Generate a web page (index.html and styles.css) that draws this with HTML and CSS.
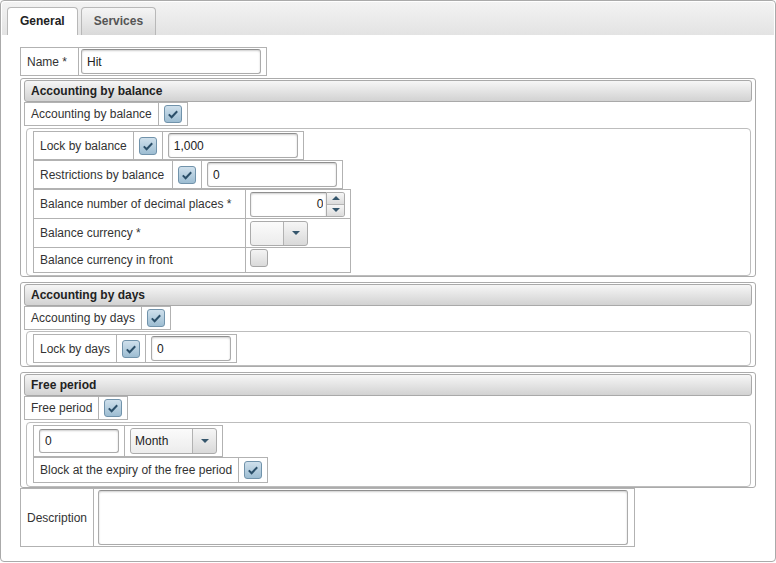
FILE: index.html
```html
<!DOCTYPE html>
<html>
<head>
<meta charset="utf-8">
<link rel="stylesheet" href="styles.css">
</head>
<body>
<div class="tabs">
  <ul class="tab-nav">
    <li class="tab active">General</li>
    <li class="tab">Services</li>
  </ul>
  <div class="panel">
    <div class="ft c2 rows-28">
      <div class="lbl"><span>Name <span class="req">*</span></span></div>
      <div class="val name-val"><input class="txt w180" value="Hit"></div>
    </div>

    <div class="group g1">
      <div class="group-head">Accounting by balance</div>
      <div class="ft c2 rows-23">
        <div class="lbl"><span>Accounting by balance</span></div>
        <div class="cbc"><span class="chk on"><svg viewBox="0 0 16 16" width="16" height="16"><path d="M3.8 8.4 L6.6 11.2 L12.2 5.2" fill="none" stroke="#2b4f69" stroke-width="2"/></svg></span></div>
      </div>
      <div class="inner">
        <div class="ft c3 rows-28">
          <div class="lbl"><span>Lock by balance</span></div>
          <div class="cbc"><span class="chk on"><svg viewBox="0 0 16 16" width="16" height="16"><path d="M3.8 8.4 L6.6 11.2 L12.2 5.2" fill="none" stroke="#2b4f69" stroke-width="2"/></svg></span></div>
          <div class="val"><input class="txt w130" value="1,000"></div>
        </div>
        <div class="ft c3 rows-28">
          <div class="lbl wide"><span>Restrictions by balance</span></div>
          <div class="cbc"><span class="chk on"><svg viewBox="0 0 16 16" width="16" height="16"><path d="M3.8 8.4 L6.6 11.2 L12.2 5.2" fill="none" stroke="#2b4f69" stroke-width="2"/></svg></span></div>
          <div class="val"><input class="txt w130" value="0"></div>
        </div>
        <div class="ft c2 rows-dec dec">
          <div class="lbl"><span>Balance number of decimal places <span class="req">*</span></span></div>
          <div class="val vpad">
            <div class="spin">
              <input class="txt num" value="0">
              <div class="spin-btns">
                <span class="sb"><i class="tri up"></i></span>
                <span class="sb"><i class="tri down"></i></span>
              </div>
            </div>
          </div>
          <div class="lbl"><span>Balance currency <span class="req">*</span></span></div>
          <div class="val vpad">
            <div class="sel w58"><span class="sel-text"></span><span class="sel-btn"><i class="tri down"></i></span></div>
          </div>
          <div class="lbl"><span>Balance currency in front</span></div>
          <div class="val vpad top"><span class="chk"></span></div>
        </div>
      </div>
    </div>

    <div class="group g2">
      <div class="group-head">Accounting by days</div>
      <div class="ft c2 rows-23">
        <div class="lbl"><span>Accounting by days</span></div>
        <div class="cbc"><span class="chk on"><svg viewBox="0 0 16 16" width="16" height="16"><path d="M3.8 8.4 L6.6 11.2 L12.2 5.2" fill="none" stroke="#2b4f69" stroke-width="2"/></svg></span></div>
      </div>
      <div class="inner inner2">
        <div class="ft c3 rows-28">
          <div class="lbl"><span>Lock by days</span></div>
          <div class="cbc"><span class="chk on"><svg viewBox="0 0 16 16" width="16" height="16"><path d="M3.8 8.4 L6.6 11.2 L12.2 5.2" fill="none" stroke="#2b4f69" stroke-width="2"/></svg></span></div>
          <div class="val"><input class="txt w80" value="0"></div>
        </div>
      </div>
    </div>

    <div class="group g3">
      <div class="group-head">Free period</div>
      <div class="ft c2 rows-23">
        <div class="lbl"><span>Free period</span></div>
        <div class="cbc"><span class="chk on"><svg viewBox="0 0 16 16" width="16" height="16"><path d="M3.8 8.4 L6.6 11.2 L12.2 5.2" fill="none" stroke="#2b4f69" stroke-width="2"/></svg></span></div>
      </div>
      <div class="inner inner3">
        <div class="ft c2 rows-31">
          <div class="val"><input class="txt w80 h24" value="0"></div>
          <div class="val"><div class="sel w87 h26"><span class="sel-text">Month</span><span class="sel-btn"><i class="tri down"></i></span></div></div>
        </div>
        <div class="ft c2 rows-25">
          <div class="lbl"><span>Block at the expiry of the free period</span></div>
          <div class="cbc"><span class="chk on"><svg viewBox="0 0 16 16" width="16" height="16"><path d="M3.8 8.4 L6.6 11.2 L12.2 5.2" fill="none" stroke="#2b4f69" stroke-width="2"/></svg></span></div>
        </div>
      </div>
    </div>

    <div class="ft c2 rows-58">
      <div class="lbl"><span>Description</span></div>
      <div class="val desc-val"><textarea class="area"></textarea></div>
    </div>
  </div>
</div>
<div class="foot"><span class="fb w66"></span><span class="fb w77"></span></div>
</body>
</html>
```
FILE: styles.css
```css
* { box-sizing: border-box; }
html, body { margin: 0; padding: 0; overflow: hidden; background: #fff; }
body {
  font-family: "Liberation Sans", Arial, sans-serif;
  font-size: 12px;
  color: #333;
}

.tabs {
  width: 776px;
  border: 1px solid #aaa;
  border-radius: 4px;
  padding: 1px;
}
.tab-nav {
  display: flex;
  gap: 3px;
  margin: 0;
  padding: 5px 0 0 5px;
  list-style: none;
  background: linear-gradient(#f3f3f3, #e3e3e3);
  border-radius: 3px 3px 0 0;
}
.tab {
  height: 28px;
  line-height: 27px;
  padding: 0 12px;
  border: 1px solid #b8b8b8;
  border-bottom: 0;
  border-radius: 4px 4px 0 0;
  font-weight: bold;
  color: #555;
  background: linear-gradient(#f5f5f5, #d9d9d9);
}
.tab.active { background: #fff; color: #222; }

.panel { padding: 12px 18px 13px; }

/* form tables */
.ft {
  display: grid;
  width: max-content;
  border-top: 1px solid #b2b2b2;
  border-left: 1px solid #b2b2b2;
}
.ft > div {
  border-right: 1px solid #b2b2b2;
  border-bottom: 1px solid #b2b2b2;
  display: flex;
  align-items: center;
  padding: 0 5px;
}
.c2 { grid-template-columns: auto auto; }
.c3 { grid-template-columns: auto auto auto; }
.rows-23 { grid-auto-rows: 23px; }
.rows-25 { grid-auto-rows: 25px; }
.rows-28 { grid-auto-rows: 28px; }
.rows-31 { grid-auto-rows: 31px; }
.rows-58 { grid-auto-rows: 58px; }
.rows-dec { grid-template-rows: 29px 29px 25px; }

.ft > .lbl { padding: 0 6px; color: #333; white-space: nowrap; }
.ft > .lbl.wide { padding-right: 8px; }
.dec > .lbl { padding-right: 9px; }
.req { margin-right: 5px; }
.ft > .cbc { padding: 0 5px; }
.ft > .val { padding: 0 5px; }
.ft > .vpad { padding: 0 5px 0 4px; }
.ft > .top { align-items: flex-start; padding-top: 1px; }
.ft > .name-val { padding: 0 5px 0 2px; }
.ft > .desc-val { padding: 0 6px 0 4px; }

/* inputs */
.txt {
  display: block;
  height: 25px;
  margin: 0;
  border: 1px solid #ababab;
  border-top-color: #8f8f8f;
  border-radius: 3px;
  box-shadow: inset 0 1px 2px rgba(0, 0, 0, 0.2);
  padding: 0 5px;
  font: 12px "Liberation Sans", Arial, sans-serif;
  color: #222;
  background: #fff;
  outline: none;
}
.h24 { height: 24px; }
.w180 { width: 180px; }
.w130 { width: 130px; }
.w80 { width: 80px; }
.area {
  display: block;
  width: 530px;
  height: 55px;
  margin: 0;
  border: 1px solid #ababab;
  border-top-color: #8f8f8f;
  border-radius: 3px;
  box-shadow: inset 0 1px 2px rgba(0, 0, 0, 0.2);
  resize: none;
  background: #fff;
}

/* checkbox */
.chk {
  display: block;
  width: 18px;
  height: 18px;
  border: 1px solid #a6a6a6;
  border-radius: 3px;
  background: linear-gradient(#f4f4f4, #dadada);
}
.chk.on {
  border-color: #7193ab;
  background: linear-gradient(#cfe0ec, #9dbdd2);
}
.chk svg { display: block; }

/* spinner */
.spin { display: flex; height: 25px; }
.spin .num {
  width: 77px;
  text-align: right;
  padding: 0 3px;
  border-radius: 3px 0 0 3px;
}
.spin-btns {
  width: 18px;
  display: flex;
  flex-direction: column;
  border: 1px solid #ababab;
  border-left: 0;
  border-radius: 0 3px 3px 0;
  overflow: hidden;
}
.sb {
  flex: 1;
  display: flex;
  align-items: center;
  justify-content: center;
  background: linear-gradient(#f6f6f6, #dcdcdc);
}
.sb + .sb { border-top: 1px solid #b5b5b5; }

.tri { display: block; width: 0; height: 0; border-left: 4px solid transparent; border-right: 4px solid transparent; }
.tri.down { border-top: 4px solid #35566c; }
.tri.up { border-bottom: 4px solid #35566c; }

/* select */
.sel {
  display: flex;
  height: 25px;
  border: 1px solid #ababab;
  border-radius: 3px;
  background: linear-gradient(#f6f6f6, #d9d9d9);
}
.sel.h26 { height: 26px; }
.w58 { width: 58px; }
.w87 { width: 87px; }
.sel-text {
  flex: 1;
  padding-left: 4px;
  display: flex;
  align-items: center;
  color: #222;
  background: linear-gradient(#fbfbfb, #ececec);
  border-radius: 3px 0 0 3px;
}
.sel-btn {
  width: 24px;
  border-left: 1px solid #b2b2b2;
  display: flex;
  align-items: center;
  justify-content: center;
}

/* groups */
.group {
  border: 1px solid #ababab;
  border-radius: 3px;
  padding: 1px 3px 0;
}
.g1 { margin-top: 2px; }
.g2, .g3 { margin-top: 5px; }
.group-head {
  height: 22px;
  line-height: 20px;
  padding-left: 6px;
  border: 1px solid #a9a9a9;
  border-radius: 3px;
  background: linear-gradient(#f6f6f6, #d2d2d2);
  font-weight: bold;
  color: #222;
}
.inner {
  margin: 2px 1px 0 2px;
  border: 1px solid #bdbdbd;
  border-radius: 4px;
  padding: 2px 6px;
}
.inner2 { margin-top: 1px; }
.inner3 { padding-bottom: 3px; }

/* cut-off buttons below */
.foot { display: flex; gap: 4px; margin-top: 1px; }
.fb {
  display: block;
  height: 20px;
  border: 1px solid #aaa;
  border-radius: 3px 3px 0 0;
  background: linear-gradient(#f5f5f5, #dcdcdc);
}
.w66 { width: 66px; }
.w77 { width: 77px; }
```
